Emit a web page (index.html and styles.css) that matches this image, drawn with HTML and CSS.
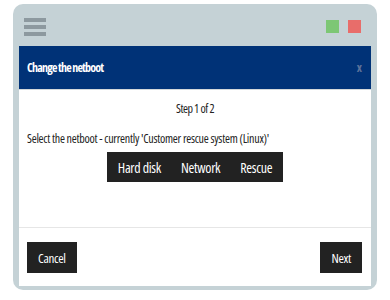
FILE: index.html
```html
<!DOCTYPE html>
<html lang="en">
<head>
  <meta charset="UTF-8" />
  <meta name="viewport" content="width=device-width, initial-scale=1.0" />
  <title>Change the netboot</title>
  <link rel="stylesheet" href="styles.css">
</head>
<body>
  <div class="window">
    <div class="topbar">
      <div class="burger"><span></span><span></span><span></span></div>
      <div class="lights">
        <span class="light green"></span>
        <span class="light red"></span>
      </div>
    </div>

    <div class="dialog">
      <div class="dialog-head">
        <span class="dialog-title">Change the netboot</span>
        <span class="dialog-close">x</span>
      </div>
      <div class="dialog-body">
        <p class="step">Step 1 of 2</p>
        <p class="intro">Select the netboot - currently 'Customer rescue system (Linux)'</p>
        <div class="choices">
          <button class="choice">Hard disk</button>
          <button class="choice">Network</button>
          <button class="choice">Rescue</button>
        </div>
      </div>
      <div class="dialog-foot">
        <button class="btn">Cancel</button>
        <button class="btn">Next</button>
      </div>
    </div>
  </div>
</body>
</html>
```

FILE: styles.css
```css
body {
  margin: 0;
  background: #fff;
  font-family: "Open Sans", "DejaVu Sans Condensed", sans-serif;
  font-stretch: 75%;
}
.window {
  margin: 4px 13px 0;
  width: 364px;
  height: 286px;
  box-sizing: border-box;
  padding: 0 6px 4px;
  background: #c5d2d6;
  border-radius: 10px;
  display: flex;
  flex-direction: column;
}
.topbar {
  height: 42px;
  display: flex;
  align-items: center;
  justify-content: space-between;
  padding: 3px 10px 0 5px;
  box-sizing: border-box;
}
.burger {
  display: flex;
  flex-direction: column;
  gap: 3px;
}
.burger span {
  display: block;
  width: 22px;
  height: 4px;
  background: #8d999f;
}
.lights {
  display: flex;
  gap: 9px;
}
.light {
  width: 13px;
  height: 13px;
}
.green { background: #7dc775; }
.red { background: #e86d6a; }

.dialog {
  flex: 1;
  background: #fff;
  display: flex;
  flex-direction: column;
}
.dialog-head {
  height: 43px;
  background: #003277;
  border-bottom: 1px solid #d4d8da;
  display: flex;
  align-items: center;
  justify-content: space-between;
  padding: 0 9px 0 8px;
}
.dialog-title {
  color: #fff;
  font-weight: bold;
  font-size: 12px;
  letter-spacing: -0.8px;
}
.dialog-close {
  color: #5d7199;
  font-weight: bold;
  font-size: 12px;
}
.dialog-body {
  flex: 1;
  padding: 11px 8px 0;
  font-size: 12px;
  color: #222;
}
.step {
  margin: 0;
  line-height: 16px;
  text-align: center;
  letter-spacing: -0.5px;
}
.intro {
  margin: 14px 0 5px;
  line-height: 16px;
  letter-spacing: -0.25px;
}
.choices {
  display: flex;
  justify-content: center;
}
.choices .choice:first-child { padding-left: 11px; }
.choices .choice:last-child { padding-right: 11px; }
.choice, .btn {
  border: none;
  background: #222;
  color: #fff;
  font-family: inherit;
  font-stretch: inherit;
  font-size: 14px;
  letter-spacing: -0.3px;
  cursor: pointer;
}
.choice {
  height: 30px;
  padding: 0 10px;
}
.dialog-foot {
  border-top: 1px solid #e6e6e6;
  display: flex;
  justify-content: space-between;
  padding: 14px 9px 13px 8px;
}
.btn {
  height: 31px;
  padding: 0 11px;
  font-size: 13px;
}
```
